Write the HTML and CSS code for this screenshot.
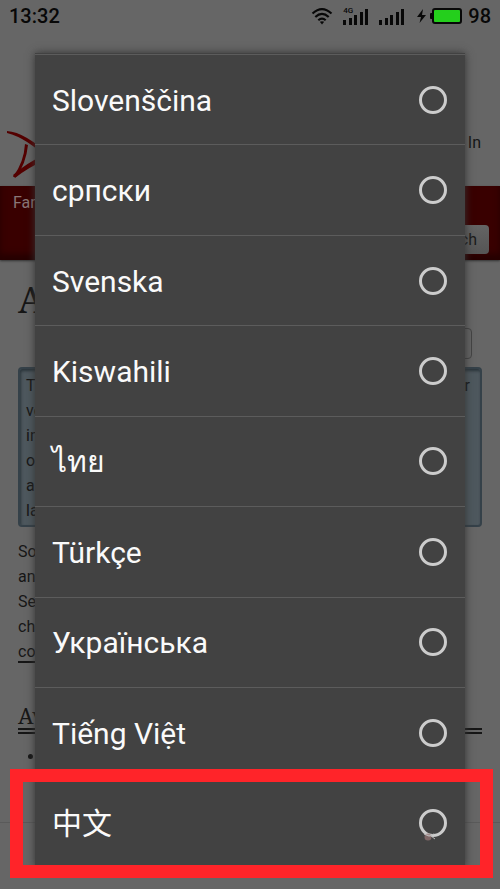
FILE: index.html
```html
<!DOCTYPE html>
<html lang="en">
<head>
<meta charset="utf-8">
<meta name="viewport" content="width=device-width, initial-scale=1">
<title>Choose a language</title>
<link rel="stylesheet" href="styles.css">
</head>
<body>
<div class="screen">
  <div class="status">
    <span class="time">13:32</span>
    <svg class="wifi" width="22" height="20" viewBox="0 0 22 20" fill="none" stroke="#080808" stroke-width="2.2"><path d="M1.5 7.5Q11-1.2 20.500 7.500M4.300 11Q11 4.800 17.700 11M7.300 14.300Q11 11 14.700 14.300"/><path d="M8.800 15.800Q11 14.500 13.200 15.800L11 18.500Z" fill="#080808" stroke="none"/></svg>
    <span class="mobile"><span class="gen">4G</span><svg width="26" height="17" viewBox="0 0 26 17" fill="#080808"><path d="M0 12h3v5H0zM6 10h3v7H6zM11 7h3v10h-3zM17 4h3v13h-3zM22 1h3v16h-3z"/></svg></span>
    <svg class="signal" width="26" height="17" viewBox="0 0 26 17" fill="#080808"><path d="M0 12h3v5H0zM6 10h3v7H6zM11 7h3v10h-3zM17 4h3v13h-3zM22 1h3v16h-3z"/></svg>
    <svg class="battery" width="46" height="18" viewBox="0 0 46 18"><path d="M6 2L0 10h4l-1.500 6L9 8H5z" fill="#080808"/><rect x="13" y="6" width="4" height="6" rx="1" fill="#080808"/><rect x="16" y="2" width="28" height="14" rx="2" fill="#24cf1c" stroke="#080808" stroke-width="2"/></svg>
    <span class="level">98</span>
  </div>

  <div class="page">
    <header class="masthead">
      <svg class="logo" width="60" height="54" viewBox="0 0 60 54" fill="#540000"><path d="M0 1Q18 2 46 28L42 30Q20 8 0 3Z"/><path d="M18 14L21 15Q19 34 9 47L6 47Q17 32 18 14Z"/><path d="M6 45Q18 34 42 22L42 28Q20 38 8 48Z"/></svg>
      <a class="login" href="#login">Log In</a>
    </header>
    <nav class="nav">
      <a class="fandoms" href="#fandoms">Fan</a>
      <button class="search" type="button">Search</button>
    </nav>
    <main class="content">
      <h1>A</h1>
      <div class="tools"><button class="tool" type="button" aria-label="Share"></button></div>
      <div class="notice"><p>T<br>ve<br>in<br>of<br>a<br>la</p><span>r</span></div>
      <p class="text">So<br>an<br>Se<br>ch<br><a href="#comments">com</a></p>
      <h2>Av</h2>
      <ul><li></li></ul>
      <hr>
    </main>
  </div>

  <form class="dialog">
    <label class="row"><span>Slovenščina</span><input type="radio" name="lang"></label>
    <label class="row"><span>српски</span><input type="radio" name="lang"></label>
    <label class="row"><span>Svenska</span><input type="radio" name="lang"></label>
    <label class="row"><span>Kiswahili</span><input type="radio" name="lang"></label>
    <label class="row"><span lang="th">ไทย</span><input type="radio" name="lang"></label>
    <label class="row"><span>Türkçe</span><input type="radio" name="lang"></label>
    <label class="row"><span>Українська</span><input type="radio" name="lang"></label>
    <label class="row"><span>Tiếng Việt</span><input type="radio" name="lang"></label>
    <label class="row"><span lang="zh">中文</span><input type="radio" name="lang"></label>
  </form>
  <div class="highlight"></div>
  <svg class="smudge" width="14" height="10" viewBox="0 0 14 10"><circle cx="5" cy="5" r="3.500" fill="#947474" opacity=".75"/><path d="M1 2l5 2 5-2M8 4l4 3" stroke="#bbb" fill="none"/></svg>
</div>
</body>
</html>
```

FILE: styles.css
```css
* { box-sizing: border-box; }
body {
  margin: 0;
  background: #666;
  color: #161616;
  font-family: Roboto, "Noto Sans", "Noto Sans CJK SC", sans-serif;
  font-size: 16px;
  line-height: 25px;
}
a { color: inherit; text-decoration: none; }
button { font: inherit; color: inherit; }
h1, h2, p, ul { margin: 0; font-weight: 400; }
.screen {
  position: relative;
  min-height: 100vh;
  overflow: hidden;
}

.status {
  display: flex;
  align-items: center;
  height: 32px;
  padding: 0 9px;
  color: #080808;
  font-size: 20px;
  font-weight: 500;
}
.time { margin-right: auto; }
.mobile { position: relative; display: flex; margin-left: 10px; }
.gen {
  position: absolute;
  left: 0;
  top: -1px;
  font-size: 8px;
  line-height: 8px;
}
.signal { margin-left: 10px; }
.battery { margin: 0 5px 0 12px; }

.masthead {
  display: flex;
  justify-content: space-between;
  align-items: flex-start;
  height: 154px;
  padding: 98px 19px 0 7px;
}
.nav {
  display: flex;
  justify-content: space-between;
  height: 74px;
  padding: 4px 11px 6px 13px;
  background: #390000;
  box-shadow: inset 0 -6px 6px #260000, 0 1px 2px #333;
  color: #8a7777;
}
.search {
  align-self: flex-end;
  height: 29px;
  padding: 0 12px;
  border: 0;
  border-radius: 4px;
  background: linear-gradient(#646464, #555);
  color: #1b1b1b;
}
.content { padding: 20px 18px 0; }
h1 {
  font: 36px/40px "Noto Serif", "Liberation Serif", serif;
}
.tools { display: flex; justify-content: flex-end; padding: 8px 10px 8px; }
.tool {
  width: 60px;
  height: 31px;
  border: 1px solid #444;
  border-radius: 4px;
  background: #646464;
}
.notice {
  display: flex;
  justify-content: space-between;
  height: 160px;
  padding: 4px 10px 4px 6px;
  border: 2px solid #354149;
  border-radius: 4px;
  background: #4e585e;
  box-shadow: inset 1px 2px 3px #2b353b;
}
.text { padding-top: 12px; }
.text a { border-bottom: 2px solid #161616; }
h2 {
  margin-top: 38px;
  border-bottom: 6px double #161616;
  font: 22px/26px "Noto Serif", "Liberation Serif", serif;
}
ul { padding: 10px 0 0 27px; }
hr { margin: 53px -18px 0; border: 0; border-top: 1px solid #5a5a5a; }

.dialog {
  position: absolute;
  top: 53px;
  bottom: 21px;
  left: 35px;
  right: 35px;
  display: grid;
  grid-auto-rows: 1fr;
  padding-top: 1px;
  background: #424242;
  box-shadow: 0 0 8px #333;
}
.row {
  display: flex;
  align-items: center;
  justify-content: space-between;
  padding: 0 18px 0 17px;
  border-top: 1px solid #5c5c5c;
  color: #fafafa;
  font-size: 30px;
  line-height: 40px;
}
.row span { padding-top: 2px; }
.row:last-child { border-top-color: transparent; }
.row [lang="zh"] {
  padding: 0 0 4px;
  font-family: "Noto Sans CJK SC", sans-serif;
}
.row input {
  appearance: none;
  width: 28px;
  height: 28px;
  margin: 0;
  border: 3px solid #ccc;
  border-radius: 50%;
}
.highlight {
  position: absolute;
  left: 10px;
  right: 7px;
  bottom: 11px;
  height: 109px;
  border: 13px solid #ff2429;
  pointer-events: none;
}
.smudge {
  position: absolute;
  right: 63px;
  bottom: 47px;
  pointer-events: none;
}
```
